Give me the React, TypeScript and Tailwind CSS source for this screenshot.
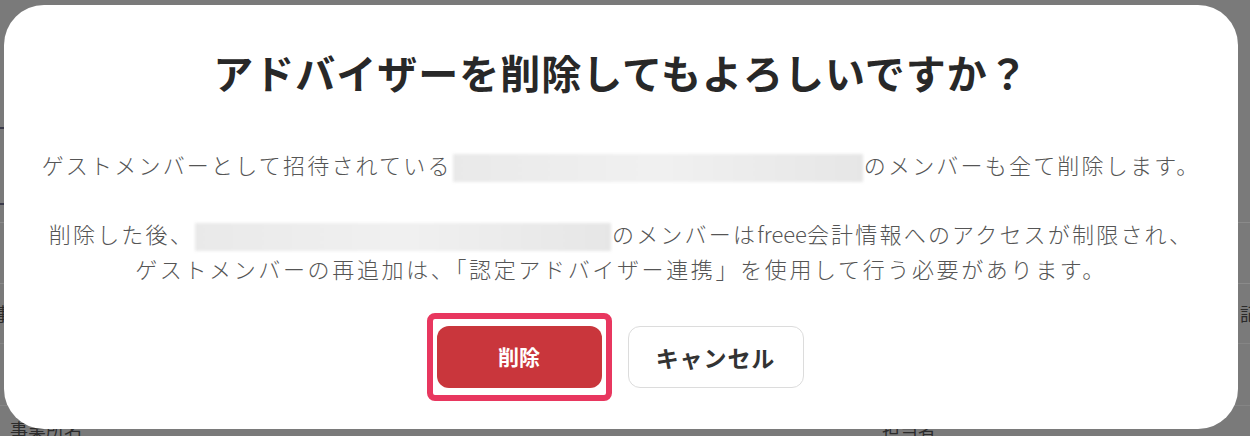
import React from 'react';

const font = { fontFamily: '"Noto Sans CJK JP", "Noto Sans", sans-serif' };

const Blurred = ({ w }: { w: string }) => (
  <span
    className={`inline-block align-middle h-[28px] ${w} mx-[1px] blur-[1.5px] bg-gradient-to-r from-[#e9e9e9] via-[#f0f0f0] to-[#e6e6e6]`}
  />
);

const App = () => {
  return (
    <div className="relative w-[1250px] h-[436px] overflow-hidden bg-[#7a7a7a]" style={font}>
      {/* page behind the overlay */}
      <div className="flex flex-col pt-[127px] text-[#2b2b2b]">
        <div className="h-[2px] w-[6px] bg-[#3a3a4a]" />
        <div className="mt-[74px] h-[2px] w-[6px] bg-[#3a3a4a]" />
        <div className="mt-[17px] h-[1px] w-full bg-[#8a8a8a]" />
        <div className="h-[60px]" />
        <div className="h-[1px] w-full bg-[#8a8a8a]" />
        <div className="flex justify-between items-center h-[59px] text-[18px]">
          <span className="-ml-[6px]">事</span>
          <span className="mr-[-8px]">記</span>
        </div>
        <div className="h-[1px] w-full bg-[#858585]" />
        <div className="mt-[61px] h-[1px] w-full bg-[#858585]" />
        <div className="flex mt-[14px] text-[18px] leading-none">
          <span className="ml-[10px]">事業所名</span>
          <span className="ml-[800px]">担当者</span>
        </div>
      </div>

      {/* modal */}
      <div className="absolute left-[4px] top-[5px] w-[1234px] h-[424px] bg-white rounded-[40px] flex flex-col items-center">
        <h1 className="mt-[40px] text-[40px] leading-[54px] font-bold text-[#282828] tracking-[0.025em]">
          アドバイザーを削除してもよろしいですか？
        </h1>
        <p className="mt-[50px] text-[22px] leading-[30px] font-light text-[#555555] tracking-[0.1em]">
          ゲストメンバーとして招待されている<Blurred w="w-[410px]" />のメンバーも全て削除します。
        </p>
        <div className="mt-[34px] text-[22px] leading-[35px] font-light text-[#555555] tracking-[0.1em] text-center">
          <p>
            削除した後、<Blurred w="w-[416px]" />のメンバーは<span className="tracking-normal">freee</span>会計情報へのアクセスが制限され、
          </p>
          <p className="tracking-[0.12em]">ゲストメンバーの再追加は、「認定アドバイザー連携」を使用して行う必要があります。</p>
        </div>
        <div className="mt-[27px] flex items-center gap-[16px] -ml-[12px]">
          <div className="px-[4px] py-[7px] border-[6px] border-[#e8375f] rounded-[8px]">
            <button className="w-[165px] h-[62px] rounded-[12px] bg-[#c9363c] text-white text-[21px] font-bold">
              削除
            </button>
          </div>
          <button className="w-[176px] h-[62px] rounded-[12px] border border-[#dcdcdc] bg-white text-[#333333] text-[23px] font-bold tracking-[0.04em]">
            キャンセル
          </button>
        </div>
      </div>
    </div>
  );
};

export default App;
